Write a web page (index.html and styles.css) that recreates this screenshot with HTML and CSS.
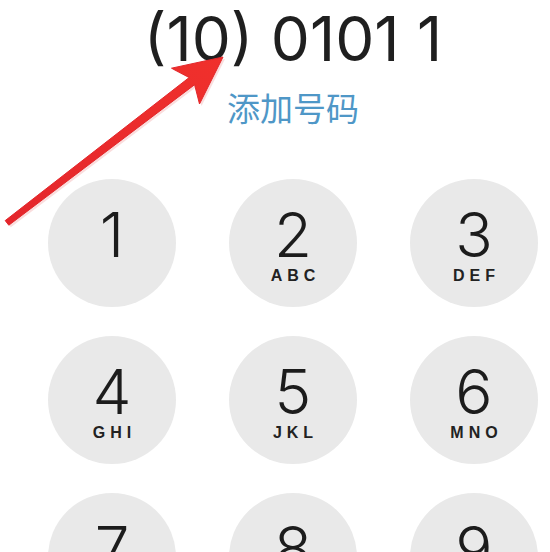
FILE: index.html
```html
<!DOCTYPE html>
<html lang="zh">
<head>
<meta charset="utf-8">
<link rel="stylesheet" href="styles.css">
</head>
<body>
<div class="screen">
  <div class="number">(10) 0101 1</div>
  <div class="add">添加号码</div>
  <div class="keypad">
    <div class="key"><span class="digit">1</span></div>
    <div class="key"><span class="digit">2</span><span class="letters">ABC</span></div>
    <div class="key"><span class="digit">3</span><span class="letters">DEF</span></div>
    <div class="key"><span class="digit">4</span><span class="letters">GHI</span></div>
    <div class="key"><span class="digit">5</span><span class="letters">JKL</span></div>
    <div class="key"><span class="digit">6</span><span class="letters">MNO</span></div>
    <div class="key"><span class="digit">7</span><span class="letters">PQRS</span></div>
    <div class="key"><span class="digit">8</span><span class="letters">TUV</span></div>
    <div class="key"><span class="digit">9</span><span class="letters">WXYZ</span></div>
  </div>
</div>
<svg class="arrow" width="550" height="552" viewBox="0 0 550 552" xmlns="http://www.w3.org/2000/svg">
  <defs>
    <linearGradient id="ag" x1="0" y1="1" x2="1" y2="0">
      <stop offset="0" stop-color="#e4262c"/>
      <stop offset="1" stop-color="#f0302c"/>
    </linearGradient>
  </defs>
  <polygon points="223,57 199.5,104 194.6,84.7 8.8,225.2 5.2,220.6 189.2,77.5 171.5,68.2" fill="#f3b3b3" opacity="0.45" transform="translate(2,2)"/>
  <polygon points="223,57 199.5,104 194.6,84.7 8.8,225.2 5.2,220.6 189.2,77.5 171.5,68.2" fill="url(#ag)" stroke="#e3272b" stroke-width="1" stroke-linejoin="round"/>
</svg>
</body>
</html>
```

FILE: styles.css
```css
html, body {
  margin: 0;
  padding: 0;
  background: #ffffff;
}
body {
  width: 550px;
  height: 552px;
  overflow: hidden;
  position: relative;
}
.screen {
  width: 490px;
  padding: 8px 0 0 48px;
  display: flex;
  flex-direction: column;
  align-items: center;
}
.number {
  font-family: Inter, "Liberation Sans", sans-serif;
  font-weight: 400;
  font-size: 62px;
  line-height: 62px;
  color: #1f1f1f;
  white-space: nowrap;
}
.add {
  margin-top: 21px;
  font-family: "Noto Sans CJK SC", sans-serif;
  font-size: 33px;
  line-height: 33px;
  color: #4f97c7;
}
.keypad {
  margin-top: 55px;
  display: grid;
  grid-template-columns: repeat(3, 128px);
  column-gap: 53px;
  row-gap: 29px;
}
.key {
  width: 128px;
  height: 128px;
  border-radius: 50%;
  background: #e9e9e9;
  display: flex;
  flex-direction: column;
  align-items: center;
  padding-top: 25px;
  box-sizing: border-box;
}
.digit {
  font-family: Inter, Roboto, "Liberation Sans", sans-serif;
  font-weight: 300;
  font-size: 62px;
  line-height: 62px;
  color: #1c1c1c;
}
.letters {
  margin-top: 1px;
  font-family: "Liberation Sans", Arial, sans-serif;
  font-weight: 700;
  font-size: 16px;
  line-height: 17px;
  letter-spacing: 5px;
  padding-left: 5px;
  color: #222222;
}
.arrow {
  position: absolute;
  left: 0;
  top: 0;
  pointer-events: none;
}
```
